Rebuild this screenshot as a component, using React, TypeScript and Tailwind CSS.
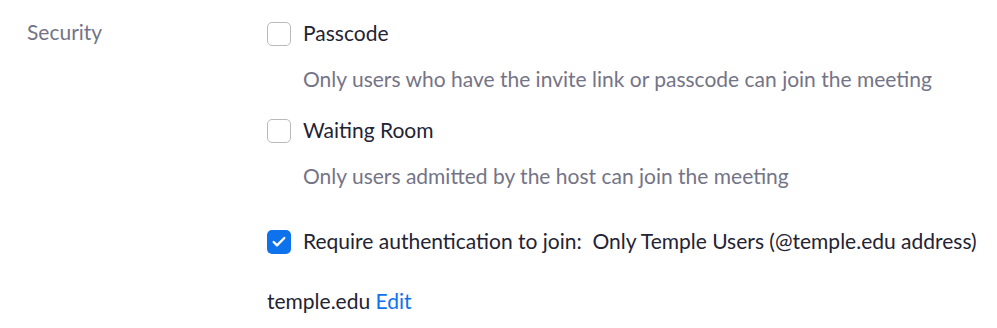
import { Check } from "lucide-react";

function Box({ checked }: { checked?: boolean }) {
  return checked ? (
    <span className="flex h-6 w-6 shrink-0 items-center justify-center rounded-[5px] bg-[#0e72ed]">
      <Check className="h-4 w-4 text-white" strokeWidth={3.5} />
    </span>
  ) : (
    <span className="h-6 w-6 shrink-0 rounded-[5px] border border-[#bababa] bg-white" />
  );
}

function Option({ label, checked }: { label: React.ReactNode; checked?: boolean }) {
  return (
    <label className="flex h-6 items-center gap-3 text-[#232333]">
      <Box checked={checked} />
      <span className="-mt-0.5 whitespace-nowrap">{label}</span>
    </label>
  );
}

export default function App() {
  return (
    <div
      className="flex h-[328px] w-[997px] bg-white text-[21px] leading-6"
      style={{ fontFamily: "Lato, 'Noto Sans', sans-serif" }}
    >
      <div className="w-[267px] shrink-0 pl-[27px] pt-5 text-[#747487]">Security</div>
      <div className="flex flex-col pt-[22px]">
        <Option label="Passcode" />
        <p className="mt-[21px] pl-9 text-[#747487]">
          Only users who have the invite link or passcode can join the meeting
        </p>
        <div className="mt-7">
          <Option label="Waiting Room" />
        </div>
        <p className="mt-[21px] pl-9 text-[#747487]">
          Only users admitted by the host can join the meeting
        </p>
        <div className="mt-[42px]">
          <Option checked label={<>Require authentication to join:&nbsp; Only Temple Users (@temple.edu address)</>} />
        </div>
        <div className="mt-[35px] whitespace-nowrap text-[#232333]">
          temple.edu <a className="text-[#0e72ed]">Edit</a>
        </div>
      </div>
    </div>
  );
}
